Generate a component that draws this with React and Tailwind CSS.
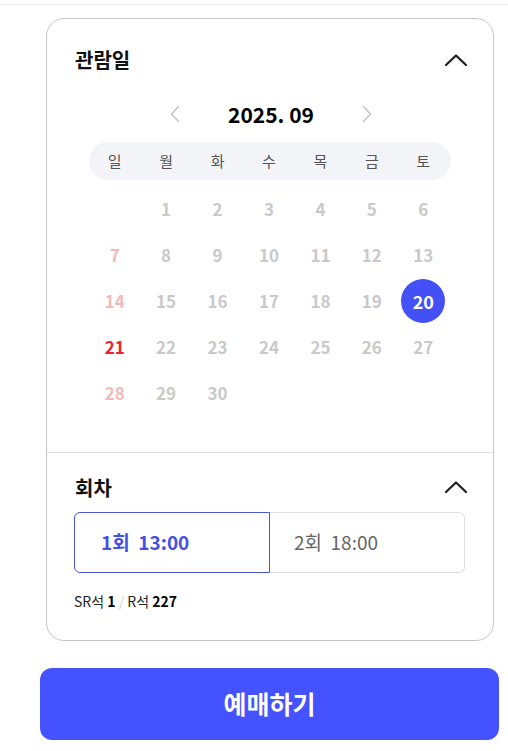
import React from "react";

const FONT = { fontFamily: '"Noto Sans CJK KR", "Noto Sans", sans-serif' };

function ChevronUp() {
  return (
    <svg width="24" height="14" viewBox="0 0 24 14" fill="none">
      <path d="M2 12 L12 2.5 L22 12" stroke="#222" strokeWidth="2.3" strokeLinecap="round" strokeLinejoin="round" />
    </svg>
  );
}

function Arrow({ dir }) {
  return (
    <svg width="10" height="18" viewBox="0 0 10 18" fill="none">
      <path
        d={dir === "left" ? "M8.5 1.5 L1.5 9 L8.5 16.5" : "M1.5 1.5 L8.5 9 L1.5 16.5"}
        stroke="#c4c4c4"
        strokeWidth="1.5"
        strokeLinecap="round"
        strokeLinejoin="round"
      />
    </svg>
  );
}

const weekdays = ["일", "월", "화", "수", "목", "금", "토"];

export default function App() {
  const cells = [null];
  for (let d = 1; d <= 30; d++) cells.push(d);

  const dayClass = (d, i) => {
    if (d === 21) return "text-[#f0202c]";
    if (i % 7 === 0) return "text-[#f3b9b9]";
    return "text-[#c9c9c9]";
  };

  return (
    <div className="w-[508px] h-[751px] bg-white overflow-hidden" style={FONT}>
      <div className="h-[5px] border-b border-[#ececec]" />
      <div className="ml-[46px] mt-[13px] w-[448px] border border-[#c6c6c6] rounded-[18px]">
        <div className="pt-[29px] px-[28px] pb-[36px]">
          <div className="flex items-center justify-between h-[24px]">
            <span className="text-[20px] font-bold text-[#111]">관람일</span>
            <span className="mr-[-3px]"><ChevronUp /></span>
          </div>
          <div className="mt-[27px] h-[30px] flex items-center justify-center gap-[48px] pl-[2px]">
            <Arrow dir="left" />
            <span className="text-[21px] font-bold text-black leading-none">2025. 09</span>
            <Arrow dir="right" />
          </div>
          <div className="mt-[13px] ml-[14px] w-[362px]">
            <div className="h-[38px] rounded-full bg-[#f3f4f8] grid grid-cols-7 w-[362px] pr-[2px]">
              {weekdays.map((w) => (
                <div key={w} className="flex items-center justify-center text-[15px] text-[#555]">
                  {w}
                </div>
              ))}
            </div>
            <div className="mt-[6px] grid grid-cols-7 w-[360px]">
              {cells.map((d, i) => (
                <div key={i} className="h-[46px] flex items-center justify-center">
                  {d === 20 ? (
                    <span className="w-[44px] h-[44px] rounded-full bg-[#4350f5] text-white text-[18px] font-bold flex items-center justify-center">
                      20
                    </span>
                  ) : d ? (
                    <span className={`text-[17px] font-bold ${dayClass(d, i)}`}>{d}</span>
                  ) : null}
                </div>
              ))}
            </div>
          </div>
        </div>
        <div className="border-t border-[#e2e2e2] pt-[23px] px-[28px] pb-[29px]">
          <div className="flex items-center justify-between h-[24px]">
            <span className="text-[20px] font-bold text-[#111]">회차</span>
            <span className="mr-[-3px] -mt-[3px]"><ChevronUp /></span>
          </div>
          <div className="mt-[12px] -ml-px flex h-[61px]">
            <button className="w-[196px] rounded-l-[6px] border border-[#4b55dc] flex items-center pl-[26px] text-[19px] font-bold text-[#4651e4]">
              1회&nbsp;&nbsp;13:00
            </button>
            <button className="flex-1 rounded-r-[6px] border border-l-0 border-[#e0e0e0] flex items-center pl-[24px] text-[19px] text-[#666]">
              2회&nbsp;&nbsp;18:00
            </button>
          </div>
          <div className="mt-[18px] text-[14px] text-[#222] leading-[20px] -ml-px">
            SR석 <b className="font-bold text-black">1</b> <span className="text-[#d4d4d4]">/</span> R석{" "}
            <b className="font-bold text-black">227</b>
          </div>
        </div>
      </div>
      <div className="mt-[27px] ml-[40px] w-[459px] h-[72px] rounded-[12px] bg-[#4452ff] flex items-center justify-center">
        <span className="text-white text-[25px] font-bold">예매하기</span>
      </div>
    </div>
  );
}
